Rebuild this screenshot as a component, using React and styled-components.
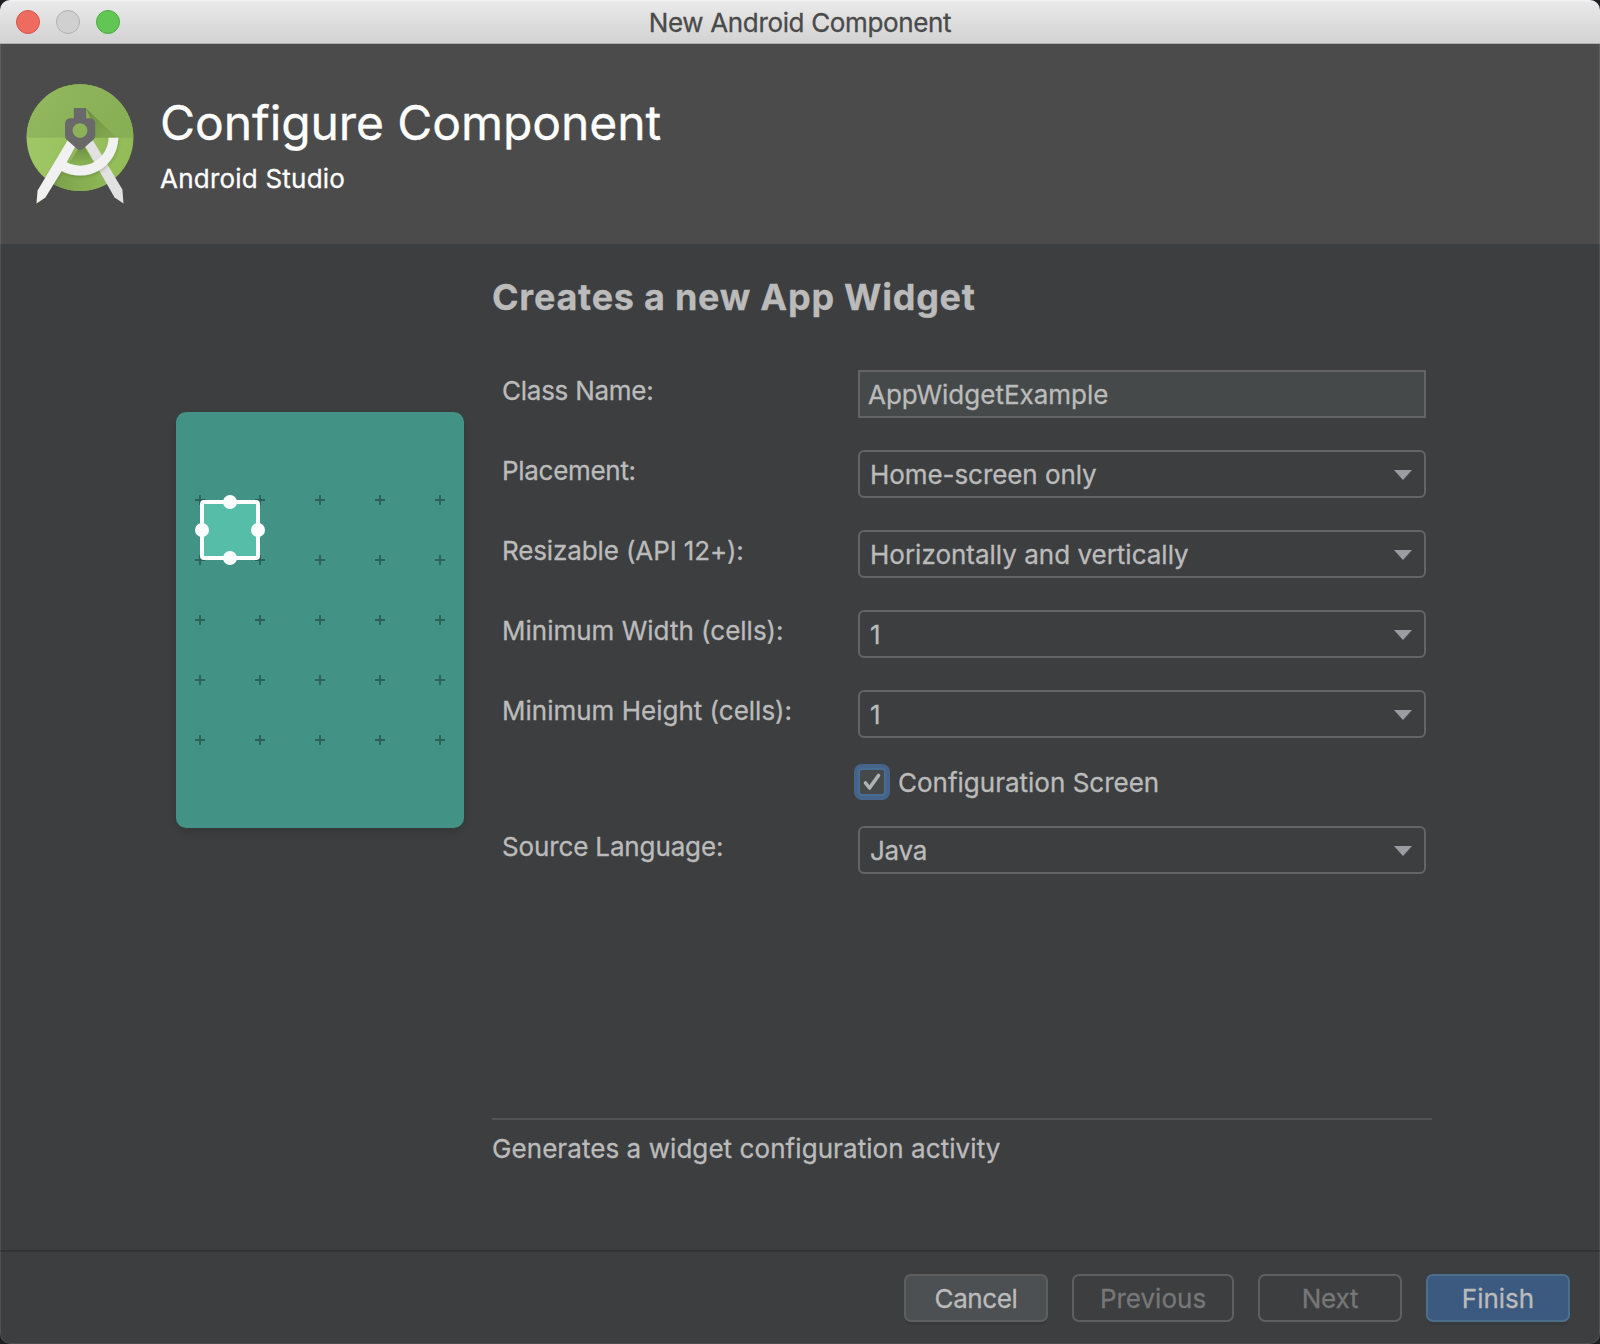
import React from "react";
import styled, { createGlobalStyle } from "styled-components";

const GlobalStyle = createGlobalStyle`
  * { box-sizing: border-box; }
  body { margin: 0; background: #1f1f21; }
`;

const Window = styled.div`
  width: 1600px;
  height: 1344px;
  display: flex;
  flex-direction: column;
  overflow: hidden;
  border-radius: 10px;
  background: #3d3e40;
  color: #bbbbbb;
  font-family: Inter, "Liberation Sans", sans-serif;
  font-size: 26px;
  line-height: 48px;
  white-space: nowrap;
  -webkit-text-stroke: 0.3px currentColor;
`;

const TitleBar = styled.header`
  height: 44px;
  flex: none;
  display: grid;
  grid-template-columns: 1fr auto 1fr;
  align-items: center;
  padding: 0 16px;
  background: linear-gradient(#f6f6f6 0, #e9e9e9 2px, #d3d3d3 42px);
  border-bottom: 1px solid #b0b0b0;
`;

const Lights = styled.div`
  display: flex;
  gap: 16px;
`;

const Light = styled.span`
  width: 24px;
  height: 24px;
  border-radius: 50%;
  background: ${(p) => p.$fill};
  border: 1px solid ${(p) => p.$edge};
`;

const Text = styled.span`
  letter-spacing: ${(p) => p.$track || 0}px;
`;

const WindowTitle = styled.h1`
  margin: 0;
  padding-top: 2px;
  font-size: 26px;
  font-weight: 400;
  line-height: 42px;
  color: #4a4a4a;
`;

const Banner = styled.section`
  height: 200px;
  flex: none;
  display: flex;
  background: #4b4b4b;
  border: solid #5e5e5e;
  border-width: 0 1px;
  padding: 36px 0 0 19px;
`;

const Logo = styled.svg`
  width: 120px;
  height: 130px;
  flex: none;
`;

const BannerText = styled.div`
  padding: 13px 0 0 20px;
  color: #ffffff;
`;

const BannerTitle = styled.h2`
  margin: 0;
  font-size: 48px;
  font-weight: 400;
  line-height: 60px;
`;

const BannerSub = styled.div`
  padding-top: 2px;
  line-height: 48px;
`;

const Body = styled.main`
  flex: 1;
  display: flex;
  border: solid #515153;
  border-width: 0 1px;
  padding-left: 175px;
`;

const Preview = styled.svg`
  width: 288px;
  height: 416px;
  flex: none;
  margin-top: 168px;
  border-radius: 10px;
  background: #429286;
  box-shadow: 0 4px 10px rgba(0, 0, 0, 0.12);
`;

const Content = styled.div`
  width: 940px;
  margin-left: 28px;
  display: flex;
  flex-direction: column;
`;

const Heading = styled.h3`
  margin: 29px 0 49px;
  font-size: 36px;
  font-weight: 700;
  line-height: 48px;
`;

const Form = styled.form`
  display: grid;
  grid-template-columns: 356px 568px;
  padding-left: 10px;
  row-gap: 32px;
`;

const Label = styled.label`
  height: 48px;
  margin-top: -3px;
`;

const Field = styled.div`
  height: 48px;
  display: flex;
  align-items: center;
  justify-content: space-between;
  border: 2px solid #646464;
  border-radius: ${(p) => (p.$combo ? 6 : 0)}px;
  background: ${(p) => (p.$combo ? "transparent" : "#45494a")};
  padding: 2px 12px 0 ${(p) => (p.$combo ? 10 : 8)}px;
`;

const Arrow = styled.svg`
  width: 18px;
  height: 10px;
`;

const CheckRow = styled.div`
  grid-column: 2;
  height: 36px;
  margin: -6px 0 -6px -4px;
  display: flex;
  align-items: center;
  gap: 8px;
`;

const CheckLabel = styled.label`
  padding-top: 2px;
`;

const Check = styled.span`
  width: 36px;
  height: 36px;
  display: flex;
  border-radius: 8px;
  background: #466489;
  padding: 4px;
`;

const CheckInner = styled.span`
  width: 28px;
  height: 28px;
  border: 2px solid #466d94;
  border-radius: 4px;
  background: #45494a;
  display: flex;
`;

const Description = styled.div`
  margin-top: 244px;
  border-top: 2px solid #515355;
  padding-top: 5px;
`;

const Footer = styled.footer`
  height: 94px;
  flex: none;
  display: flex;
  justify-content: flex-end;
  gap: 24px;
  border-left: 1px solid #515153;
  border-right: 1px solid #515153;
  border-bottom: 1px solid #4e4e50;
  border-top: 2px solid #323334;
  border-radius: 0 0 10px 10px;
  padding: 22px 29px 0 0;
`;

const buttonStyles = {
  normal: "background:#4c5052;border-color:#5e6060;color:#bbbbbb;box-shadow:0 4px 0 -1px #38393b;",
  disabled: "background:transparent;border-color:#5e6060;color:#777777;",
  primary: "background:#3c5980;border-color:#4c708c;color:#bbbbbb;box-shadow:0 4px 0 -1px #38393b;",
};

const Button = styled.button`
  width: ${(p) => p.$width}px;
  height: 48px;
  padding: 2px 0 0;
  border: 2px solid;
  border-radius: 7px;
  font: inherit;
  line-height: 42px;
  -webkit-text-stroke: 0.3px currentColor;
  ${(p) => buttonStyles[p.$kind]}
`;

const LEVELS = [0, 1, 2, 3, 4];

function StudioLogo() {
  return (
    <Logo viewBox="20 80 120 130">
      <defs>
        <linearGradient id="top" x1="0" x2="1" y1="0" y2="0.3">
          <stop offset="0" stopColor="#95b962" />
          <stop offset="1" stopColor="#87af54" />
        </linearGradient>
        <linearGradient id="low" x1="0" x2="1" y1="0" y2="0">
          <stop offset="0" stopColor="#9fc765" />
          <stop offset="1" stopColor="#93bc58" />
        </linearGradient>
        <linearGradient id="cast" x1="0" x2="1" y1="0" y2="1">
          <stop offset="0" stopColor="#6c8f40" />
          <stop offset="1" stopColor="#84ac52" />
        </linearGradient>
        <linearGradient id="inner" x1="0" x2="0" y1="0" y2="1">
          <stop offset="0" stopColor="#6c8e40" />
          <stop offset="1" stopColor="#8db758" />
        </linearGradient>
        <linearGradient id="under" x1="0" x2="1" y1="0" y2="0">
          <stop offset="0" stopColor="#7a9f4a" />
          <stop offset="1" stopColor="#91bb58" />
        </linearGradient>
        <clipPath id="disc"><circle cx="80" cy="137.7" r="53.4" /></clipPath>
        <filter id="soft" x="-20%" y="-20%" width="140%" height="140%">
          <feDropShadow dx="0.5" dy="1.5" stdDeviation="1.5" floodColor="#3d5220" floodOpacity="0.3" />
        </filter>
      </defs>
      <circle cx="80" cy="137.7" r="53.4" fill="url(#low)" />
      <g clipPath="url(#disc)">
        <path d="M20 80H140V137.7H20Z" fill="url(#top)" />
        <path d="M86.3 108.5L117 137.7H90V118Z" fill="url(#cast)" />
        <path d="M80 146L68 165Q80 169 94 163L84 146Z" fill="url(#inner)" />
        <path d="M61 172Q80 180 102 169L113 192H48Z" fill="url(#under)" />
      </g>
      <path d="M84.5 145L93 140.5L122.4 189.5L123.5 203.5L114.6 197.5Z" fill="#e1e1e1" />
      <g filter="url(#soft)" fill="#f1f1f1">
        <path d="M67.5 140.5L75.6 146L66.7 162.3A28.5 28.5 0 0 0 108.6 137.7H118.3A38.4 38.4 0 0 1 61.7 171L45.4 197.6L36.5 203.5L37.6 190.5Z" />
      </g>
      <path
        fillRule="evenodd"
        fill="#696969"
        d="M73.8 108H86.3V118.3H90Q95.2 119 95.2 124V136Q95 138 93.5 139.5L82.5 149.2Q80 151 77.5 149.2L66.5 139.5Q65 138 65 136V124Q65 119 70 118.3H73.8ZM80 123.2A7.4 7.4 0 1 0 80 138A7.4 7.4 0 1 0 80 123.2Z"
      />
    </Logo>
  );
}

function WidgetPreview() {
  return (
    <Preview viewBox="0 0 288 416">
      {LEVELS.map((r) =>
        LEVELS.map((c) => (
          <path
            key={`${r}-${c}`}
            d={`M${19 + c * 60} ${88 + r * 60}h10M${24 + c * 60} ${83 + r * 60}v10`}
            stroke="#2b6058"
            strokeWidth="1.8"
          />
        ))
      )}
      <rect x="26" y="90" width="56" height="56" rx="2" fill="#56bda8" stroke="#ffffff" strokeWidth="4" />
      <g fill="#ffffff">
        <circle cx="54" cy="90" r="7" />
        <circle cx="54" cy="146" r="7" />
        <circle cx="26" cy="118" r="7" />
        <circle cx="82" cy="118" r="7" />
      </g>
    </Preview>
  );
}

function Combo({ label, value, labelTrack, valueTrack }) {
  return (
    <>
      <Label><Text $track={labelTrack}>{label}</Text></Label>
      <Field $combo>
        <Text $track={valueTrack}>{value}</Text>
        <Arrow viewBox="0 0 18 10"><path d="M0 0H18L9 10Z" fill="#9b9da3" /></Arrow>
      </Field>
    </>
  );
}

export default function App() {
  return (
    <>
      <GlobalStyle />
      <Window>
        <TitleBar>
          <Lights>
            <Light $fill="#ed6b5f" $edge="#d3584d" />
            <Light $fill="#d0d0d0" $edge="#b1b1b1" />
            <Light $fill="#61c654" $edge="#4faa41" />
          </Lights>
          <WindowTitle><Text $track={-0.35}>New Android Component</Text></WindowTitle>
        </TitleBar>
        <Banner>
          <StudioLogo />
          <BannerText>
            <BannerTitle><Text $track={-0.08}>Configure Component</Text></BannerTitle>
            <BannerSub><Text $track={0.22}>Android Studio</Text></BannerSub>
          </BannerText>
        </Banner>
        <Body>
          <WidgetPreview />
          <Content>
            <Heading><Text $track={0.74}>Creates a new App Widget</Text></Heading>
            <Form>
              <Label><Text $track={-0.25}>Class Name:</Text></Label>
              <Field><Text>AppWidgetExample</Text></Field>
              <Combo label="Placement:" labelTrack={-0.3} value="Home-screen only" valueTrack={-0.07} />
              <Combo label="Resizable (API 12+):" labelTrack={-0.12} value="Horizontally and vertically" />
              <Combo label="Minimum Width (cells):" value="1" />
              <Combo label="Minimum Height (cells):" value="1" />
              <CheckRow>
                <Check>
                  <CheckInner>
                    <svg width="24" height="24" viewBox="0 0 24 24">
                      <path d="M5.5 13L9.500 18L18.500 5.500" fill="none" stroke="#b2b2b2" strokeWidth="3.600" strokeLinecap="round" strokeLinejoin="round" />
                    </svg>
                  </CheckInner>
                </Check>
                <CheckLabel><Text>Configuration Screen</Text></CheckLabel>
              </CheckRow>
              <Combo label="Source Language:" labelTrack={-0.14} value="Java" valueTrack={-0.3} />
            </Form>
            <Description><Text $track={0.07}>Generates a widget configuration activity</Text></Description>
          </Content>
        </Body>
        <Footer>
          <Button $kind="normal" $width={144}><Text $track={-0.4}>Cancel</Text></Button>
          <Button $kind="disabled" $width={162}><Text>Previous</Text></Button>
          <Button $kind="disabled" $width={144}><Text $track={-0.2}>Next</Text></Button>
          <Button $kind="primary" $width={144}><Text>Finish</Text></Button>
        </Footer>
      </Window>
    </>
  );
}
